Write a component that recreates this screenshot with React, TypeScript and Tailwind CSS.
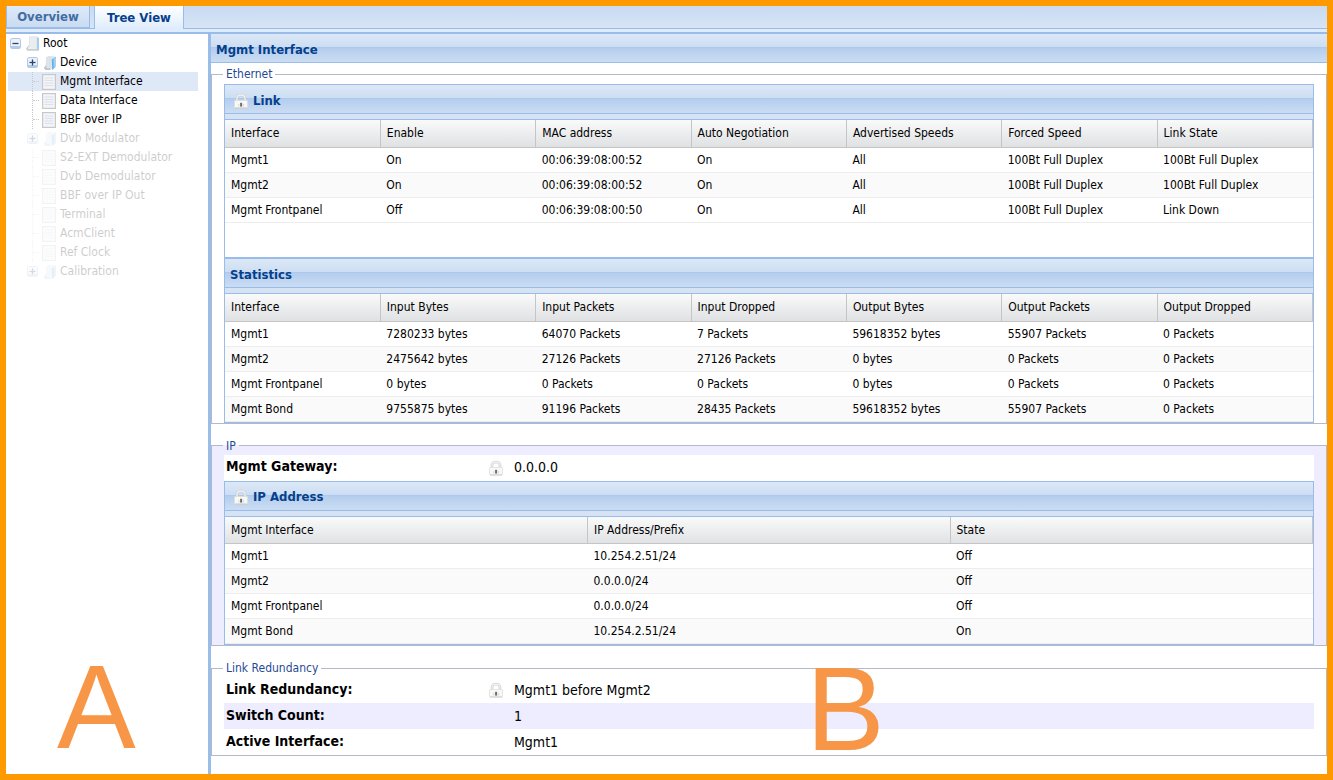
import type { ReactNode } from "react";

const FONT = "font-['DejaVu_Sans_Condensed','DejaVu_Sans',sans-serif]";

function LockIcon() {
  return (
    <svg viewBox="0 0 16 16" className="h-4 w-4 shrink-0" aria-hidden="true">
      <path d="M4 8V5.5C4 0.8 12 0.8 12 5.5V8" fill="none" stroke="#c8c9ca" strokeWidth="2.6" />
      <path d="M4 8V5.5C4 0.8 12 0.8 12 5.5V8" fill="none" stroke="#f1f1f0" strokeWidth="1.3" />
      <rect x="1.5" y="7.5" width="13" height="7.5" rx="0.6" fill="#f8f8f6" stroke="#dcdcda" strokeWidth="0.7" />
      <path d="M2 15H14.2" stroke="#c4c4c4" strokeWidth="0.8" />
      <rect x="7.1" y="9.8" width="2" height="3.8" fill="#6e6e6e" />
      <path d="M5.8 11V13.5M10.6 11V13.5" stroke="#d0d0d0" strokeWidth="0.8" />
    </svg>
  );
}

function ExpanderIcon({ open }: { open: boolean }) {
  return (
    <svg viewBox="0 0 11 11" className="h-[11px] w-[11px]" aria-hidden="true">
      <rect x="0.5" y="0.5" width="10" height="10" rx="1.2" fill="#eaf1fa" stroke="#b3c8e2" />
      <path d="M1 8H10V10H1Z" fill="#b4cae6" />
      <path d="M2.5 5.5H8.5" stroke="#2b4670" strokeWidth="1.3" />
      {!open && <path d="M5.5 2.5V8.5" stroke="#2b4670" strokeWidth="1.3" />}
    </svg>
  );
}

function FolderIcon({ root }: { root?: boolean }) {
  return root ? (
    <svg viewBox="0 0 16 16" className="h-4 w-4 shrink-0" aria-hidden="true">
      <path d="M4.5 0.8H12V13.5H3.5L4.5 9Z" fill="#e9edf0" stroke="#d5dade" strokeWidth="0.6" />
      <path d="M12 1L14 2V14.5L12 13.8Z" fill="#a5cdec" />
      <path d="M3.8 9L0.8 12.8L2.5 14.8H14L12 13H4.5Z" fill="#c9ced2" />
      <path d="M3.8 10.5L2.5 12.5L4 13H11Z" fill="#eef1f3" />
    </svg>
  ) : (
    <svg viewBox="0 0 16 16" className="h-4 w-4 shrink-0" aria-hidden="true">
      <path d="M4.5 2.5L7.5 1V13.5H4Z" fill="#dfe5ea" stroke="#c9d0d6" strokeWidth="0.5" />
      <path d="M8 1.2H12.5L9.8 4.5V14.5L8 13.5Z" fill="#cfe4f5" />
      <path d="M9.8 4.5L13.5 1.5V12L10.2 15Z" fill="#69aee0" />
      <path d="M11.5 3.5L13.8 1.6V11.5L11.8 13.5Z" fill="#a7d0ef" />
      <path d="M4.3 10L1.8 12.8L3.5 15H9L7.8 13.3H4.5Z" fill="#bfc5ca" />
    </svg>
  );
}

function PageIcon() {
  return (
    <svg viewBox="0 0 14 16" className="h-4 w-3.5 shrink-0" aria-hidden="true">
      <rect x="0.6" y="0.6" width="12.8" height="14.8" fill="#f4f6f9" stroke="#c8c8c8" strokeWidth="1.2" />
      <path d="M2.5 4H11.5M2.5 6.5H11.5M2.5 9H11.5M2.5 11.5H11.5" stroke="#d9e0ea" strokeWidth="1" />
      <path d="M4.5 2.5V13.5M9.5 2.5V13.5" stroke="#e6eaf0" strokeWidth="0.8" />
    </svg>
  );
}

type Node = { label: string; branch?: boolean; selected?: boolean; faded?: boolean };

const NODES: Node[] = [
  { label: "Device", branch: true },
  { label: "Mgmt Interface", selected: true },
  { label: "Data Interface" },
  { label: "BBF over IP" },
  { label: "Dvb Modulator", branch: true, faded: true },
  { label: "S2-EXT Demodulator", faded: true },
  { label: "Dvb Demodulator", faded: true },
  { label: "BBF over IP Out", faded: true },
  { label: "Terminal", faded: true },
  { label: "AcmClient", faded: true },
  { label: "Ref Clock", faded: true },
  { label: "Calibration", branch: true, faded: true },
];

function Tree() {
  return (
    <ul className="pr-2.5 pl-0.5 text-[12px] leading-[19px] text-black">
      <li>
        <div className="flex h-[19px] items-center pl-0.5">
          <button type="button" aria-label="Collapse Root" className="mr-1">
            <ExpanderIcon open />
          </button>
          <FolderIcon root />
          <button type="button" className="ml-0.5">Root</button>
        </div>
        <ul>
          {NODES.map((n) => (
            <li
              key={n.label}
              className={`flex h-[19px] items-center pl-[18px] ${n.selected ? "bg-[#dfe8f6]" : ""} ${n.faded ? "opacity-20" : ""}`}
            >
              {n.branch ? (
                <button type="button" aria-label={`Expand ${n.label}`} className="mr-1 ml-px">
                  <ExpanderIcon open={false} />
                </button>
              ) : (
                <span className="ml-1.5 flex h-[19px] w-2.5 items-center border-l border-dotted border-[#c8c8c8]">
                  <span className="w-1.5 border-t border-dotted border-[#c8c8c8]" />
                </span>
              )}
              {n.branch ? <FolderIcon /> : <PageIcon />}
              <button type="button" className={n.branch ? "ml-0.5" : "ml-1"}>
                {n.label}
              </button>
            </li>
          ))}
        </ul>
      </li>
    </ul>
  );
}

const HEADER_BG =
  "bg-[linear-gradient(#dce8f6,#cddef3_45%,#a9c6ec_46%,#b5ceee_52%,#cbddf3)]";

function PanelTitle({ children, lock }: { children: ReactNode; lock?: boolean }) {
  return (
    <h2
      className={`flex h-[29px] items-center gap-1 border-b border-[#99bce8] pt-[3px] text-[13px] font-bold text-[#04408c] ${HEADER_BG} ${lock ? "pl-2" : "pl-[5px]"}`}
    >
      {lock && <LockIcon />}
      {children}
    </h2>
  );
}

function Grid({ title, lock, columns, rows }: { title: string; lock?: boolean; columns: string[]; rows: string[][] }) {
  return (
    <section>
      <PanelTitle lock={lock}>{title}</PanelTitle>
      <div className="h-1.5 border-b border-[#99bce8] bg-[#d5e3f4]" />
      <table aria-label={title} className="w-full table-fixed border-collapse text-left text-[12px] text-black">
        <thead>
          <tr className="h-[27px] bg-linear-to-b from-[#fafafa] to-[#dfe1e3]">
            {columns.map((c) => (
              <th key={c} scope="col" className="border-r border-b border-[#c5c5c5] pl-1.5 font-normal">
                {c}
              </th>
            ))}
          </tr>
        </thead>
        <tbody>
          {rows.map((r) => (
            <tr key={r[0]} className="h-[25px] border-b border-[#ededed] even:bg-[#fafafa]">
              {r.map((c, i) => (
                <td key={i} className="pl-1.5">
                  {c}
                </td>
              ))}
            </tr>
          ))}
        </tbody>
      </table>
    </section>
  );
}

function Group({ legend, tint, children }: { legend: string; tint?: boolean; children: ReactNode }) {
  return (
    <fieldset className={`border border-[#b5b8c8] px-3 ${tint ? "bg-[#eeedff]" : ""}`}>
      <legend className="-ml-px px-[3px] text-[12px] leading-[18px] text-[#1f4b96]">{legend}</legend>
      {children}
    </fieldset>
  );
}

function Field({ label, value, lock, tint }: { label: string; value: string; lock?: boolean; tint?: boolean }) {
  return (
    <div className={`flex h-[26px] items-center pl-0.5 text-black ${tint ? "bg-[#eeedff]" : "bg-white"}`}>
      <dt className="w-[262px] pb-0.5 text-[14px] font-bold">{label}</dt>
      <dd className="flex items-center text-[14px]">
        <span className="mr-2.5 flex w-4">{lock && <LockIcon />}</span>
        {value}
      </dd>
    </div>
  );
}

export default function App() {
  return (
    <div className={`flex min-h-screen flex-col border-6 border-[#ff9900] bg-white ${FONT}`}>
      <nav className="flex h-[23px] gap-1 border-b border-[#99bce8] bg-linear-to-b from-[#c9dbf1] to-[#d6e4f5] text-[13px] font-bold">
        <button
          type="button"
          className="h-[22px] w-[84px] border border-t-0 border-[#99bce8] bg-linear-to-b from-[#dce9f8] to-[#cbdcf1] text-[#416da3]"
        >
          Overview
        </button>
        <button
          type="button"
          className="h-[23px] w-[90px] border-x border-[#99bce8] bg-linear-to-b from-white to-[#deecfd] text-[#04408c]"
        >
          Tree View
        </button>
      </nav>
      <div className="h-[5px] border-b-2 border-[#99bce8] bg-[#deecfd]" />
      <div className="flex grow">
        <aside className="relative w-[205px] shrink-0 border-r-3 border-[#99bce8]">
          <Tree />
          <span className="absolute bottom-2 left-[51px] font-['Liberation_Sans',Arial,sans-serif] text-[118px] leading-none text-[#f79646]">
            A
          </span>
        </aside>
        <main className="relative min-w-0 grow">
          <PanelTitle>Mgmt Interface</PanelTitle>
          <div className="flex flex-col gap-[13px] pt-0.5">
            <Group legend="Ethernet">
              <div className="mt-px border border-[#99bce8]">
                <div className="min-h-[172px]">
                  <Grid
                    title="Link"
                    lock
                    columns={["Interface", "Enable", "MAC address", "Auto Negotiation", "Advertised Speeds", "Forced Speed", "Link State"]}
                    rows={[
                      ["Mgmt1", "On", "00:06:39:08:00:52", "On", "All", "100Bt Full Duplex", "100Bt Full Duplex"],
                      ["Mgmt2", "On", "00:06:39:08:00:52", "On", "All", "100Bt Full Duplex", "100Bt Full Duplex"],
                      ["Mgmt Frontpanel", "Off", "00:06:39:08:00:50", "On", "All", "100Bt Full Duplex", "Link Down"],
                    ]}
                  />
                </div>
                <div className="border-t-2 border-[#99bce8]">
                  <Grid
                    title="Statistics"
                    columns={["Interface", "Input Bytes", "Input Packets", "Input Dropped", "Output Bytes", "Output Packets", "Output Dropped"]}
                    rows={[
                      ["Mgmt1", "7280233 bytes", "64070 Packets", "7 Packets", "59618352 bytes", "55907 Packets", "0 Packets"],
                      ["Mgmt2", "2475642 bytes", "27126 Packets", "27126 Packets", "0 bytes", "0 Packets", "0 Packets"],
                      ["Mgmt Frontpanel", "0 bytes", "0 Packets", "0 Packets", "0 bytes", "0 Packets", "0 Packets"],
                      ["Mgmt Bond", "9755875 bytes", "91196 Packets", "28435 Packets", "59618352 bytes", "55907 Packets", "0 Packets"],
                    ]}
                  />
                </div>
              </div>
            </Group>
            <Group legend="IP" tint>
              <dl>
                <Field label="Mgmt Gateway:" value="0.0.0.0" lock />
              </dl>
              <div className="border border-[#99bce8] bg-white">
                <Grid
                  title="IP Address"
                  lock
                  columns={["Mgmt Interface", "IP Address/Prefix", "State"]}
                  rows={[
                    ["Mgmt1", "10.254.2.51/24", "Off"],
                    ["Mgmt2", "0.0.0.0/24", "Off"],
                    ["Mgmt Frontpanel", "0.0.0.0/24", "Off"],
                    ["Mgmt Bond", "10.254.2.51/24", "On"],
                  ]}
                />
              </div>
            </Group>
            <Group legend="Link Redundancy">
              <dl>
                <Field label="Link Redundancy:" value="Mgmt1 before Mgmt2" lock />
                <Field label="Switch Count:" value="1" tint />
                <Field label="Active Interface:" value="Mgmt1" />
              </dl>
            </Group>
          </div>
          <span className="absolute bottom-1.5 left-[595px] font-['Liberation_Sans',Arial,sans-serif] text-[118px] leading-none text-[#f79646]">
            B
          </span>
        </main>
      </div>
    </div>
  );
}
